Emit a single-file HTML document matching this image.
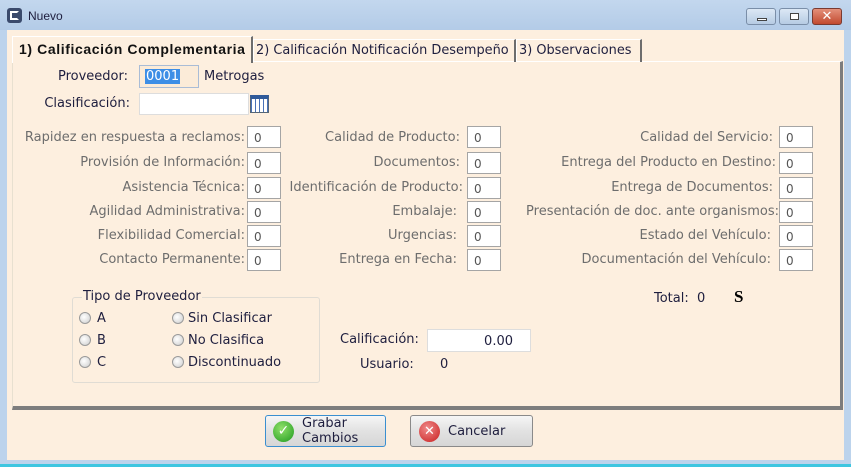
<!DOCTYPE html><html><head><style>
*{margin:0;padding:0;box-sizing:border-box}
body{width:851px;height:467px;overflow:hidden;font-family:"DejaVu Sans",sans-serif;font-size:13px;background:#bcd3ec;position:relative}
.a{position:absolute;white-space:nowrap}
.l{position:absolute;color:#6d6d6d;text-align:right;white-space:nowrap;margin-top:2px}
.t{margin-top:1px}
.i{position:absolute;width:34px;height:22px;background:#fff;border:1px solid #a5a5a5;padding:4px 0 0 6px;color:#555;font-size:12px}
.r{position:absolute;width:12px;height:12px;border-radius:50%;border:1px solid #9a9a9a;background:radial-gradient(circle at 40% 40%,#fff,#ccc)}
.btn{position:absolute;height:32px;border:1px solid #8a8a8a;border-radius:3px;background:linear-gradient(#f6f6f6,#e2e2e2 50%,#d6d6d6)}
.d{color:#1e1e3e}
</style></head><body>
<div class="a" style="left:0;top:0;width:851px;height:30px;background:linear-gradient(#c3d7ee,#b3cbe7)"></div>
<div class="a" style="left:7px;top:8px;width:15px;height:15px;border-radius:3px;background:#3a4a6c"></div>
<div class="a" style="left:10px;top:11px;width:9px;height:9px;border:2px solid #fff;border-right-color:transparent"></div>
<div class="a" style="left:28px;top:9px;font-size:12px;color:#1e1e3e;font-family:'Liberation Sans',sans-serif">Nuevo</div>
<div class="a" style="left:746px;top:8px;width:30px;height:17px;border:1px solid #7a8ea8;border-radius:3px;background:linear-gradient(#dce8f5,#b6cbe3)"><div class="a" style="left:10px;top:9px;width:10px;height:3px;background:#fff;border:1px solid #444"></div></div>
<div class="a" style="left:779px;top:8px;width:30px;height:17px;border:1px solid #7a8ea8;border-radius:3px;background:linear-gradient(#dce8f5,#b6cbe3)"><div class="a" style="left:10px;top:4px;width:9px;height:7px;border:1px solid #444;background:#fff"></div></div>
<div class="a" style="left:812px;top:8px;width:30px;height:17px;border:1px solid #7a3a30;border-radius:3px;background:linear-gradient(#e4907a,#c24a30);color:#fff;font-weight:bold;font-size:13px;text-align:center;line-height:15px">✕</div>
<div class="a" style="left:7px;top:30px;width:837px;height:430px;background:#fdefdf"></div>
<div class="a" style="left:12px;top:61px;width:831px;height:349px;border:1px solid #fff;border-right:3px solid #7d7d7d;border-bottom:4px solid #7d7d7d;border-left:1px solid #e8e0d0"></div>
<div class="a d" style="left:253px;top:39px;width:263px;height:23px;border:1px solid #fff;border-right:2px solid #6d6d6d;border-bottom:none;padding:3px 0 0 2px;font-size:12.9px">2) Calificación Notificación Desempeño</div>
<div class="a d" style="left:516px;top:39px;width:126px;height:23px;border:1px solid #fff;border-right:2px solid #6d6d6d;border-bottom:none;padding:3px 0 0 2px;font-size:12.9px">3) Observaciones</div>
<div class="a" style="left:12px;top:36px;width:241px;height:27px;background:#fdefdf;border:1px solid #fff;border-right:2px solid #6d6d6d;border-bottom:none;padding:4px 0 0 6px;font-weight:bold;font-size:14px;letter-spacing:0.6px;color:#111;font-family:'Liberation Sans',sans-serif">1) Calificación Complementaria</div>
<div class="l d" style="left:0;top:67px;width:128px">Proveedor:</div>
<div class="a" style="left:139px;top:65px;width:60px;height:23px;border:1px solid #a9bcd6;background:#fbebd8"><span style="position:absolute;left:5px;top:3px;background:#3d8ee6;color:#fff;padding:0 1px">0001</span></div>
<div class="a d t" style="left:204px;top:68px">Metrogas</div>
<div class="l d" style="left:0;top:94px;width:130px">Clasificación:</div>
<div class="a" style="left:139px;top:93px;width:110px;height:22px;background:#fff;border:1px solid #ddd"></div>
<div class="a" style="left:250px;top:95px;width:19px;height:18px;border:1px solid #567;background:repeating-linear-gradient(90deg,#4a72b8 0 1px,#fff 1px 4px);border-top:4px solid #2f5a9a"></div>

<div class="l" style="left:0;top:128px;width:245px">Rapidez en respuesta a reclamos:</div>
<div class="l" style="left:0;top:153px;width:245px">Provisión de Información:</div>
<div class="l" style="left:0;top:178px;width:245px">Asistencia Técnica:</div>
<div class="l" style="left:0;top:202px;width:245px">Agilidad Administrativa:</div>
<div class="l" style="left:0;top:226px;width:245px">Flexibilidad Comercial:</div>
<div class="l" style="left:0;top:250px;width:245px">Contacto Permanente:</div>
<div class="i" style="left:247px;top:126px">0</div><div class="i" style="left:247px;top:152px">0</div><div class="i" style="left:247px;top:177px">0</div><div class="i" style="left:247px;top:201px">0</div><div class="i" style="left:247px;top:225px">0</div><div class="i" style="left:247px;top:249px">0</div>

<div class="l" style="left:250px;top:128px;width:210px">Calidad de Producto:</div>
<div class="l" style="left:250px;top:153px;width:210px">Documentos:</div>
<div class="l" style="left:250px;top:178px;width:213px">Identificación de Producto:</div>
<div class="l" style="left:250px;top:202px;width:207px">Embalaje:</div>
<div class="l" style="left:250px;top:226px;width:207px">Urgencias:</div>
<div class="l" style="left:250px;top:250px;width:207px">Entrega en Fecha:</div>
<div class="i" style="left:467px;top:126px">0</div><div class="i" style="left:467px;top:152px">0</div><div class="i" style="left:467px;top:177px">0</div><div class="i" style="left:467px;top:201px">0</div><div class="i" style="left:467px;top:225px">0</div><div class="i" style="left:467px;top:249px">0</div>

<div class="l" style="left:460px;top:128px;width:313px">Calidad del Servicio:</div>
<div class="l" style="left:460px;top:153px;width:316px">Entrega del Producto en Destino:</div>
<div class="l" style="left:460px;top:178px;width:313px">Entrega de Documentos:</div>
<div class="l" style="left:460px;top:202px;width:319px">Presentación de doc. ante organismos:</div>
<div class="l" style="left:460px;top:226px;width:311px">Estado del Vehículo:</div>
<div class="l" style="left:460px;top:250px;width:311px">Documentación del Vehículo:</div>
<div class="i" style="left:779px;top:126px">0</div><div class="i" style="left:779px;top:152px">0</div><div class="i" style="left:779px;top:177px">0</div><div class="i" style="left:779px;top:201px">0</div><div class="i" style="left:779px;top:225px">0</div><div class="i" style="left:779px;top:249px">0</div>

<div class="a d t" style="left:654px;top:290px">Total:&nbsp; 0</div>
<div class="a" style="left:734px;top:287px;font-family:'Liberation Serif',serif;font-weight:bold;font-size:17px">S</div>

<div class="a" style="left:72px;top:297px;width:248px;height:86px;border:1px solid #e0dcd4;border-radius:3px"></div>
<div class="a d" style="left:82px;top:289px;background:#fdefdf;padding:0 1px">Tipo de Proveedor</div>
<div class="r" style="left:79px;top:312px"></div><div class="a d t" style="left:97px;top:310px">A</div>
<div class="r" style="left:79px;top:334px"></div><div class="a d t" style="left:97px;top:332px">B</div>
<div class="r" style="left:79px;top:356px"></div><div class="a d t" style="left:97px;top:354px">C</div>
<div class="r" style="left:172px;top:312px"></div><div class="a d t" style="left:188px;top:310px">Sin Clasificar</div>
<div class="r" style="left:172px;top:334px"></div><div class="a d t" style="left:188px;top:332px">No Clasifica</div>
<div class="r" style="left:172px;top:356px"></div><div class="a d t" style="left:188px;top:354px">Discontinuado</div>

<div class="a d t" style="left:340px;top:331px">Calificación:</div>
<div class="a d" style="left:427px;top:329px;width:104px;height:23px;background:#fff;border:1px solid #ddd;text-align:right;padding:4px 17px 0 0">0.00</div>
<div class="a d t" style="left:360px;top:356px">Usuario:</div>
<div class="a d t" style="left:440px;top:356px">0</div>

<div class="btn" style="left:265px;top:415px;width:121px;border-color:#3a8fd0"><div class="a" style="left:7px;top:5px;width:21px;height:21px;border-radius:50%;background:radial-gradient(circle at 40% 35%,#8fe06a,#1e9a1e);color:#fff;font-weight:bold;text-align:center;line-height:21px;font-size:14px">✓</div><div class="a d" style="left:36px;top:0;line-height:15px">Grabar<br>Cambios</div></div>
<div class="btn" style="left:410px;top:415px;width:123px"><div class="a" style="left:8px;top:5px;width:21px;height:21px;border-radius:50%;background:radial-gradient(circle at 40% 35%,#f08a8a,#c81e1e);color:#fff;font-weight:bold;text-align:center;line-height:21px;font-size:13px">✕</div><div class="a d" style="left:37px;top:8px">Cancelar</div></div>
<div class="a" style="left:0;top:464px;width:851px;height:3px;background:#3ec6e0"></div>
</body></html>
